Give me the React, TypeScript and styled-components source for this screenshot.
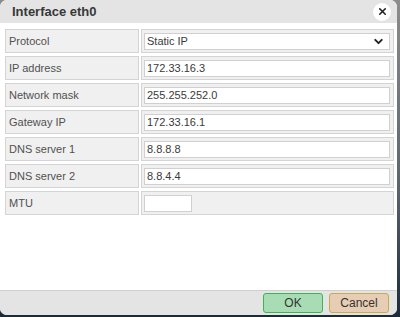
import { Fragment } from 'react';
import styled, { createGlobalStyle } from 'styled-components';
import { X, ChevronDown } from 'lucide-react';

const GlobalStyle = createGlobalStyle`
  html, body {
    margin: 0;
    padding: 0;
    height: 317px;
    background: linear-gradient(#8c8c8c, #5a636c 60%, #1b2a39);
    font-family: "Liberation Sans", Arial, sans-serif;
  }
`;

const Dialog = styled.div`
  width: 397px;
  height: 315px;
  background: #fff;
  border-radius: 7px;
  overflow: hidden;
  display: flex;
  flex-direction: column;
`;

const TitleBar = styled.div`
  height: 23px;
  flex: none;
  background: #e4e4e4;
  display: flex;
  align-items: center;
  justify-content: space-between;
  padding: 0 6px 0 12px;
`;

const Title = styled.div`
  font-size: 13px;
  font-weight: bold;
  color: #383838;
`;

const CloseButton = styled.button`
  width: 18px;
  height: 18px;
  border-radius: 50%;
  border: none;
  background: #fff;
  padding: 0;
  display: flex;
  align-items: center;
  justify-content: center;
  color: #222;
`;

const Body = styled.div`
  flex: 1;
  padding: 6px 3px 0 5px;
`;

const Grid = styled.div`
  display: grid;
  grid-template-columns: 134px 1fr;
  grid-auto-rows: 24px;
  column-gap: 2px;
  row-gap: 3px;
`;

const Cell = styled.div<{ $label?: boolean }>`
  box-sizing: border-box;
  border: 1px solid #d4d4d4;
  background: #f0f0f0;
  display: flex;
  align-items: center;
  padding: ${p => (p.$label ? '0 0 0 3px' : '0 3px 0 2px')};
  font-size: 11px;
  color: #505050;
`;

const Input = styled.input<{ $small?: boolean }>`
  box-sizing: border-box;
  height: 17px;
  width: ${p => (p.$small ? '48px' : '100%')};
  border: 1px solid #d0d0d0;
  background: #fff;
  font: 11px "Liberation Sans", Arial, sans-serif;
  color: #3a3a3a;
  padding: 0 2px;
  outline: none;
`;

const SelectWrap = styled.div`
  position: relative;
  width: 100%;
  height: 17px;
`;

const Select = styled.select`
  box-sizing: border-box;
  width: 100%;
  height: 17px;
  appearance: none;
  border: 1px solid #d0d0d0;
  background: #fff;
  font: 11px "Liberation Sans", Arial, sans-serif;
  color: #3a3a3a;
  padding: 0 2px;
  outline: none;
`;

const Chevron = styled.span`
  position: absolute;
  right: 5px;
  top: 2px;
  display: flex;
  color: #222;
  pointer-events: none;
`;

const Footer = styled.div`
  height: 24px;
  flex: none;
  background: #e4e4e4;
  border-top: 1px solid #cfcfcf;
  display: flex;
  justify-content: flex-end;
  align-items: center;
  gap: 6px;
  padding-right: 8px;
`;

const Button = styled.button<{ $variant: 'ok' | 'cancel' }>`
  width: 60px;
  height: 20px;
  border-radius: 3px;
  font: 12px "Liberation Sans", Arial, sans-serif;
  color: #333;
  padding: 0;
  border: 1px solid ${p => (p.$variant === 'ok' ? '#3cb450' : '#c9aa4c')};
  background: ${p => (p.$variant === 'ok' ? '#a7dcb4' : '#e6cdb3')};
`;

const fields = [
  { label: 'IP address', value: '172.33.16.3' },
  { label: 'Network mask', value: '255.255.252.0' },
  { label: 'Gateway IP', value: '172.33.16.1' },
  { label: 'DNS server 1', value: '8.8.8.8' },
  { label: 'DNS server 2', value: '8.8.4.4' },
];

const App = () => {
  return (
    <>
      <GlobalStyle />
      <Dialog>
        <TitleBar>
          <Title>Interface eth0</Title>
          <CloseButton aria-label="close">
            <X size={11} strokeWidth={3.5} />
          </CloseButton>
        </TitleBar>

        <Body>
          <Grid>
            <Cell $label>Protocol</Cell>
            <Cell>
              <SelectWrap>
                <Select defaultValue="static">
                  <option value="static">Static IP</option>
                  <option value="dhcp">DHCP</option>
                </Select>
                <Chevron>
                  <ChevronDown size={13} strokeWidth={3.5} />
                </Chevron>
              </SelectWrap>
            </Cell>

            {fields.map(f => (
              <Fragment key={f.label}>
                <Cell $label>{f.label}</Cell>
                <Cell>
                  <Input defaultValue={f.value} />
                </Cell>
              </Fragment>
            ))}

            <Cell $label>MTU</Cell>
            <Cell>
              <Input $small />
            </Cell>
          </Grid>
        </Body>

        <Footer>
          <Button $variant="ok">OK</Button>
          <Button $variant="cancel">Cancel</Button>
        </Footer>
      </Dialog>
    </>
  );
};

export default App;
